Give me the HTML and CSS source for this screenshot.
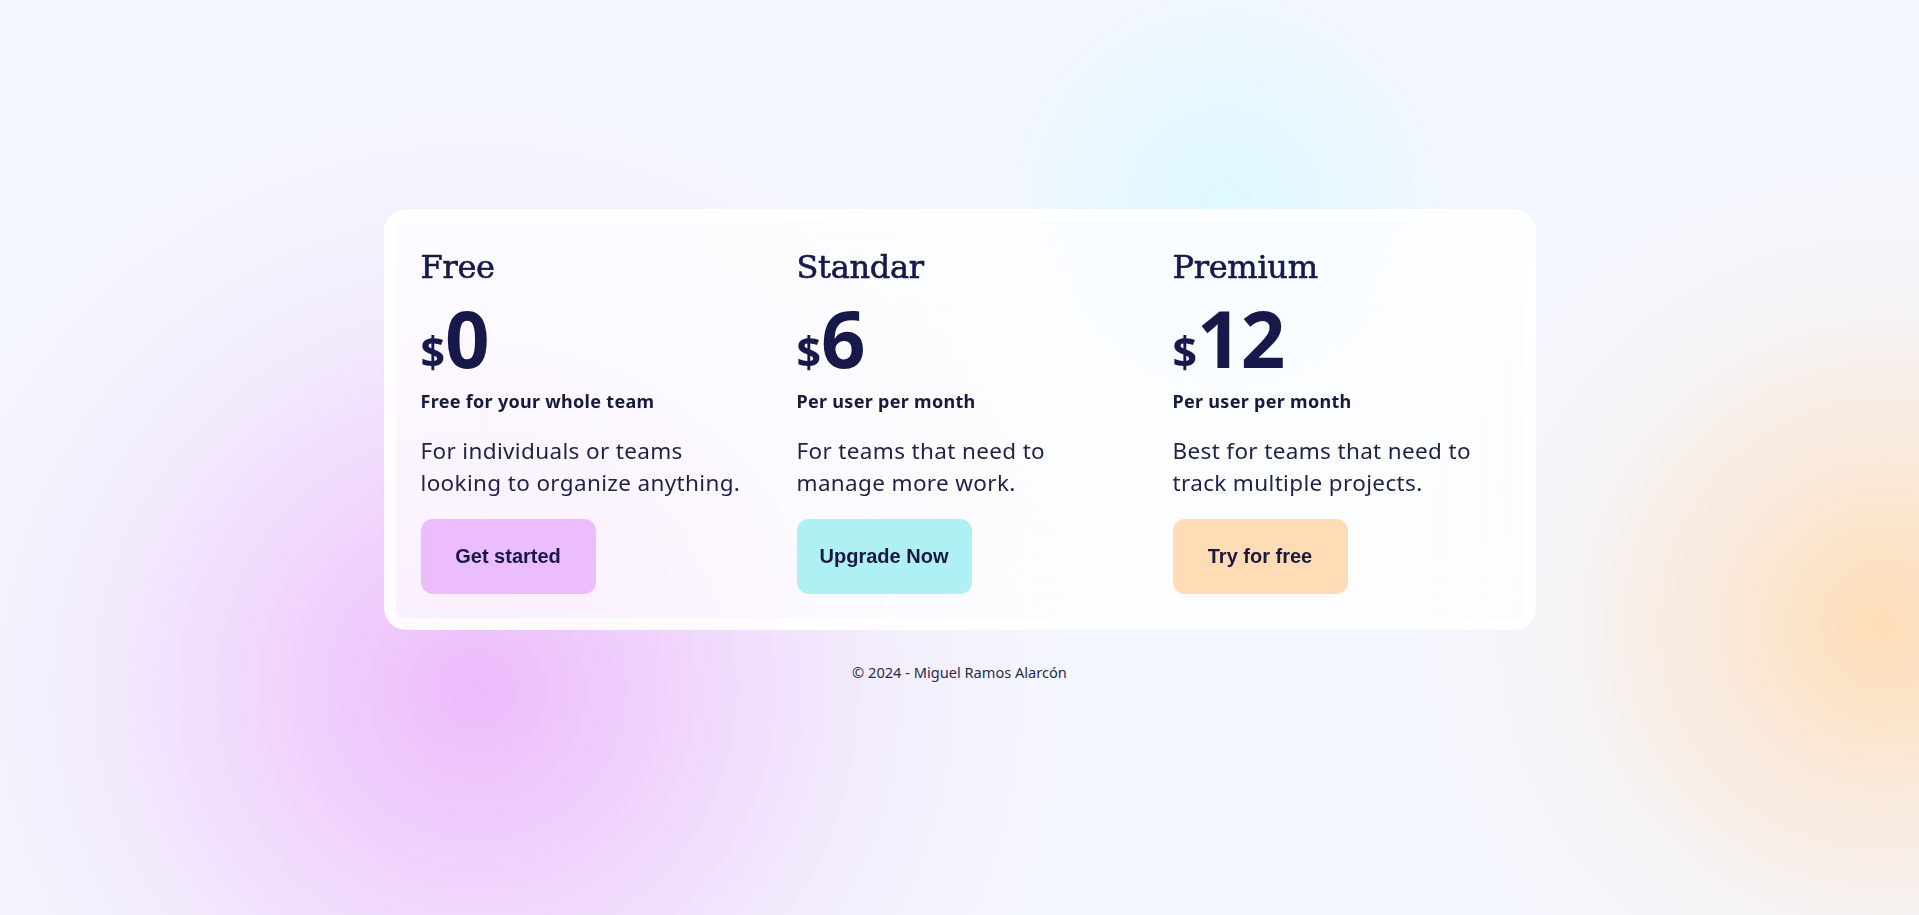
FILE: index.html
```html
<!DOCTYPE html>
<html lang="en">
<head>
<meta charset="utf-8">
<title>Pricing</title>
<link rel="stylesheet" href="styles.css">
</head>
<body>
<main class="page">
  <section class="card">
    <div class="plan">
      <h2 class="plan-name">Free</h2>
      <p class="price"><span class="currency">$</span><span class="amount">0</span></p>
      <p class="period">Free for your whole team</p>
      <p class="desc">For individuals or teams looking to organize anything.</p>
      <button class="btn btn-pink">Get started</button>
    </div>
    <div class="plan">
      <h2 class="plan-name">Standar</h2>
      <p class="price"><span class="currency">$</span><span class="amount">6</span></p>
      <p class="period">Per user per month</p>
      <p class="desc">For teams that need to manage more work.</p>
      <button class="btn btn-cyan">Upgrade Now</button>
    </div>
    <div class="plan">
      <h2 class="plan-name">Premium</h2>
      <p class="price"><span class="currency">$</span><span class="amount">12</span></p>
      <p class="period">Per user per month</p>
      <p class="desc">Best for teams that need to track multiple projects.</p>
      <button class="btn btn-orange">Try for free</button>
    </div>
  </section>
  <footer class="footer">© 2024 - Miguel Ramos Alarcón</footer>
</main>
</body>
</html>
```

FILE: styles.css
```css
* { box-sizing: border-box; }

html, body {
  margin: 0;
  height: 100%;
}

body {
  font-family: "Noto Sans", "Liberation Sans", sans-serif;
  color: #1a1b45;
  background-color: #f4f6fd;
  background-image:
    radial-gradient(circle at 477px 690px, rgba(236, 184, 252, 0.95) 0px, rgba(238, 196, 252, 0.62) 220px, rgba(240, 215, 252, 0.28) 400px, rgba(244, 230, 252, 0) 580px),
    radial-gradient(circle at 1885px 625px, rgba(254, 220, 180, 0.95) 0px, rgba(253, 225, 195, 0.55) 180px, rgba(250, 235, 220, 0.2) 330px, rgba(248, 240, 235, 0) 460px),
    radial-gradient(circle at 1225px 205px, rgba(220, 249, 255, 0.95) 0px, rgba(224, 248, 255, 0.6) 120px, rgba(235, 246, 253, 0) 240px);
  overflow: hidden;
}

.page {
  min-height: 100vh;
  display: flex;
  flex-direction: column;
  align-items: center;
  justify-content: center;
}

.card {
  width: 1152px;
  display: grid;
  grid-template-columns: repeat(3, 1fr);
  border: 12px solid rgba(255, 255, 255, 0.9);
  border-radius: 22px;
  background: rgba(255, 255, 255, 0.72);
  background-clip: padding-box;
  backdrop-filter: blur(40px);
}

.plan {
  padding: 27px 25px 24px;
  display: flex;
  flex-direction: column;
  align-items: flex-start;
}

.plan-name {
  margin: 0;
  font-family: "DejaVu Serif", "Liberation Serif", serif;
  font-weight: normal;
  font-size: 32px;
  line-height: 1.2;
  color: #17194a;
  letter-spacing: -0.3px;
  -webkit-text-stroke: 0.6px #17194a;
}

.price {
  margin: 12px 0 0;
  display: flex;
  align-items: baseline;
  color: #17194a;
  font-weight: 700;
  white-space: nowrap;
}

.currency {
  font-size: 43px;
  line-height: 1;
}

.amount {
  font-size: 78px;
  line-height: 1;
  letter-spacing: -1px;
}

.period {
  margin: 12px 0 0;
  font-size: 18px;
  line-height: 25px;
  letter-spacing: 0.3px;
  font-weight: 700;
  color: #17193f;
}

.desc {
  margin: 21px 0 0;
  font-size: 22.5px;
  line-height: 32px;
  letter-spacing: 0.35px;
  color: #1f2147;
  max-width: 330px;
}

.btn {
  margin-top: 20px;
  width: 175px;
  height: 75px;
  border: 0;
  border-radius: 12px;
  font-family: "Liberation Sans", Arial, sans-serif;
  font-weight: 700;
  font-size: 20px;
  color: #1a1840;
  cursor: pointer;
}

.btn-pink { background: #ecbdfd; }
.btn-cyan { background: #aef0f3; }
.btn-orange { background: #ffdcb5; }

.footer {
  margin-top: 32px;
  margin-bottom: 24px;
  font-size: 14.6px;
  line-height: 20px;
  color: #2a2b4d;
}
```
